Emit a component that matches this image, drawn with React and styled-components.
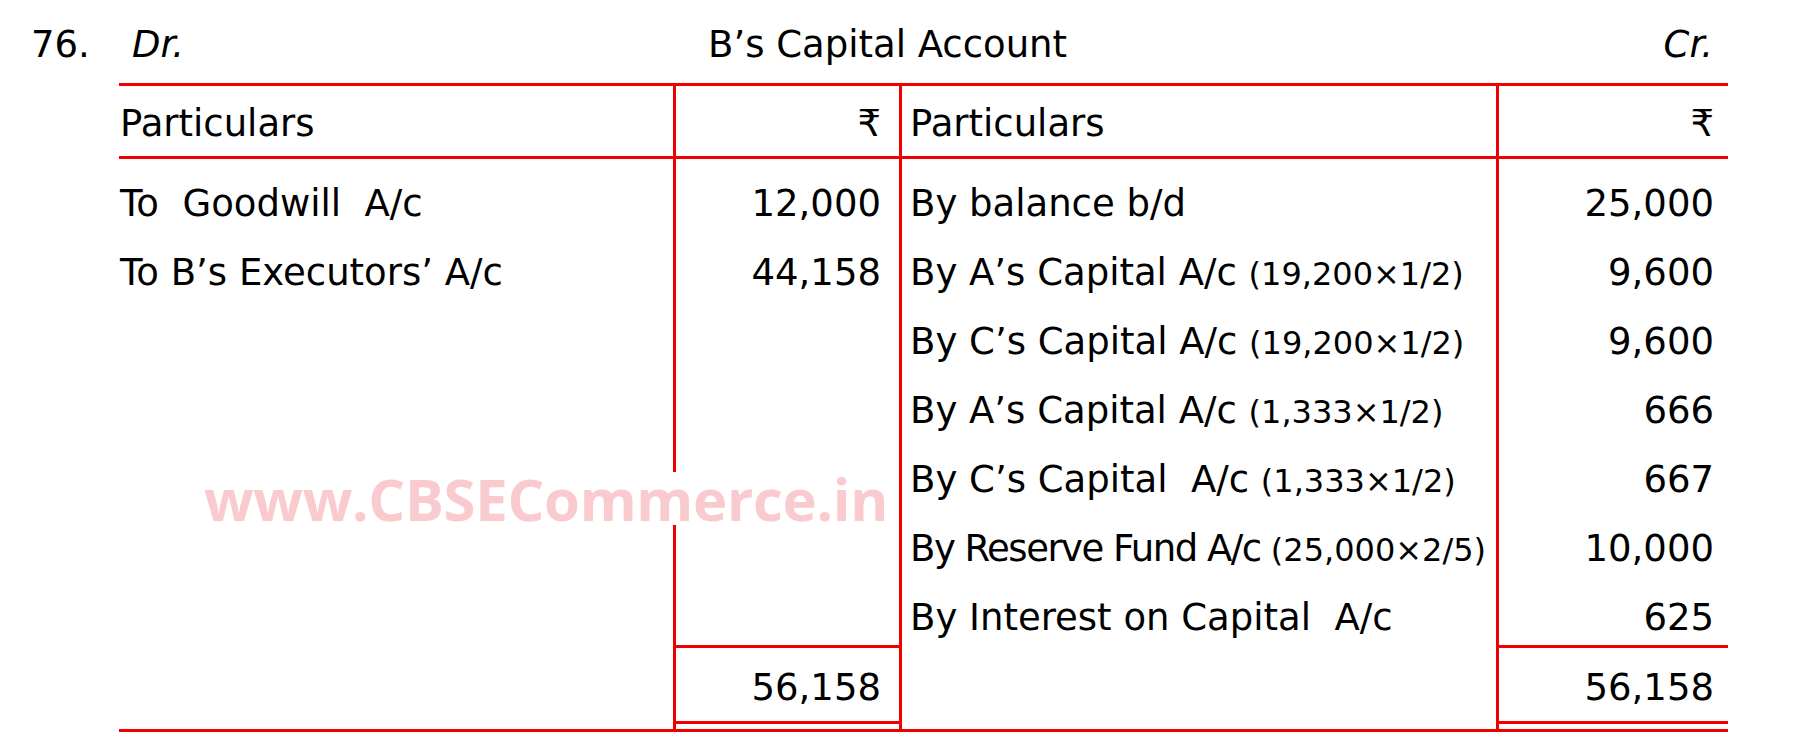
import styled, { createGlobalStyle } from 'styled-components';

const RED = '#f20000';

const GlobalStyle = createGlobalStyle`
  html, body {
    margin: 0;
    padding: 0;
    background: #fff;
  }
  body {
    font-family: "DejaVu Sans", "Noto Sans", sans-serif;
    color: #000;
  }
`;

const Page = styled.div`
  display: grid;
  grid-template-columns: 119px 1609px;
  align-content: start;
  width: 1800px;
  min-height: 754px;
  font-size: 37px;
  line-height: 44px;
`;

const Num = styled.div`
  padding: 23px 0 0 31px;
`;

const TitleBar = styled.div`
  display: grid;
  grid-template-columns: 576px auto 1fr;
  height: 83px;
  box-sizing: border-box;
  padding: 23px 15px 0 13px;
`;

const Side = styled.span`
  font-style: italic;
  text-align: ${p => (p.$right ? 'right' : 'left')};
`;

const Table = styled.div`
  grid-column: 2;
  position: relative;
  display: grid;
  grid-template-columns: 557px 226px 597px 229px;
  align-content: start;
  border-top: 3px solid ${RED};
  border-bottom: 3px solid ${RED};
`;

// one cell of the ledger; $amount = money column, $last = far right column
const Cell = styled.div`
  box-sizing: border-box;
  display: flex;
  align-items: flex-start;
  justify-content: ${p => (p.$amount ? 'flex-end' : 'flex-start')};
  padding-left: ${p => (p.$amount ? 0 : p.$first ? 1 : 8)}px;
  padding-right: ${p => (p.$amount ? (p.$last ? 14 : 18) : 0)}px;
  border-right: ${p => (p.$last ? 'none' : `3px solid ${RED}`)};
  white-space: pre;
`;

const HeadCell = styled(Cell)`
  height: 73px;
  padding-top: 16px;
  border-bottom: 3px solid ${RED};
`;

const BodyCell = styled(Cell)`
  height: ${p => (p.$tail ? 72 : 69)}px;
  padding-top: 23px;
`;

const Entry = styled.span`
  letter-spacing: ${p => (p.$tight ? '-1.5px' : 'normal')};
`;

const TotalCell = styled(Cell)`
  height: 84px;
  padding-top: 0;
  padding-bottom: 5px;
  padding-right: 0;
`;

const TotalBox = styled.div`
  box-sizing: border-box;
  flex: 1;
  height: 79px;
  padding: 18px ${p => (p.$last ? 14 : 18)}px 0 0;
  text-align: right;
  border-top: 3px solid ${RED};
  border-bottom: 3px solid ${RED};
`;

const Small = styled.span`
  font-size: 32px;
  line-height: 1;
  letter-spacing: normal;
`;

const Watermark = styled.div`
  position: absolute;
  left: 85px;
  top: 386px;
  height: 53px;
  line-height: 53px;
  font-family: "Open Sans", "Noto Sans", sans-serif;
  font-weight: 700;
  font-size: 58px;
  letter-spacing: -0.3px;
  color: #f9cbcf;
  background: #fff;
  white-space: nowrap;
`;

const debits = [
  { text: 'To  Goodwill  A/c', amount: '12,000' },
  { text: 'To B’s Executors’ A/c', amount: '44,158' },
];

const credits = [
  { text: 'By balance b/d', amount: '25,000' },
  { text: 'By A’s Capital A/c ', note: '(19,200×1/2)', amount: '9,600' },
  { text: 'By C’s Capital A/c ', note: '(19,200×1/2)', amount: '9,600' },
  { text: 'By A’s Capital A/c ', note: '(1,333×1/2)', amount: '666' },
  { text: 'By C’s Capital  A/c ', note: '(1,333×1/2)', amount: '667' },
  { text: 'By Reserve Fund A/c ', note: '(25,000×2/5)', amount: '10,000', tight: true },
  { text: 'By Interest on Capital  A/c', amount: '625' },
];

export default function App() {
  return (
    <>
      <GlobalStyle />
      <Page>
        <Num>76.</Num>
        <TitleBar>
          <Side>Dr.</Side>
          <span>B’s Capital Account</span>
          <Side $right>Cr.</Side>
        </TitleBar>

        <Table>
          <HeadCell $first>Particulars</HeadCell>
          <HeadCell $amount>₹</HeadCell>
          <HeadCell>Particulars</HeadCell>
          <HeadCell $amount $last>₹</HeadCell>

          {credits.map((c, i) => {
            const d = debits[i];
            const tail = i === credits.length - 1;
            return [
              <BodyCell key={`dt${i}`} $first $tail={tail}>{d ? d.text : ''}</BodyCell>,
              <BodyCell key={`da${i}`} $amount $tail={tail}>{d ? d.amount : ''}</BodyCell>,
              <BodyCell key={`ct${i}`} $tail={tail}>
                <Entry $tight={c.tight}>
                  {c.text}
                  {c.note && <Small>{c.note}</Small>}
                </Entry>
              </BodyCell>,
              <BodyCell key={`ca${i}`} $amount $last $tail={tail}>{c.amount}</BodyCell>,
            ];
          })}

          <TotalCell $first />
          <TotalCell $amount><TotalBox>56,158</TotalBox></TotalCell>
          <TotalCell />
          <TotalCell $amount $last><TotalBox $last>56,158</TotalBox></TotalCell>

          <Watermark>www.CBSECommerce.in</Watermark>
        </Table>
      </Page>
    </>
  );
}
